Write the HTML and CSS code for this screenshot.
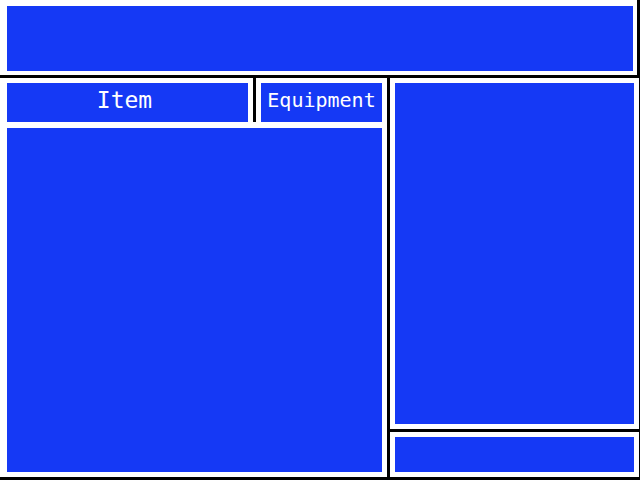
FILE: index.html
```html
<!DOCTYPE html>
<html lang="en">
<head>
  <meta charset="UTF-8" />
  <meta name="viewport" content="width=device-width, initial-scale=1.0" />
  <title>Menu</title>
  <link rel="stylesheet" href="styles.css">
</head>

<body>
  <div class="screen">
    <!-- 顶部信息窗口 -->
    <div class="window top-window">
      <div class="pane"></div>
    </div>

    <div class="main-row">
      <div class="left-col">
        <div class="tabs">
          <div class="window tab item-tab">
            <div class="pane tab-pane item-label">Item</div>
          </div>
          <div class="window tab equip-tab">
            <div class="pane tab-pane equip-label">Equipment</div>
          </div>
        </div>
        <div class="window list-window">
          <div class="pane"></div>
        </div>
      </div>

      <div class="right-col">
        <div class="window detail-window">
          <div class="pane"></div>
        </div>
        <div class="window status-window">
          <div class="pane"></div>
        </div>
      </div>
    </div>
  </div>
</body>
</html>
```

FILE: styles.css
```css
* {
  box-sizing: border-box;
}

body {
  margin: 0;
  padding: 0;
  background-color: #000;
  font-family: "DejaVu Sans Mono", "Liberation Mono", monospace;
}

.screen {
  width: 640px;
  height: 480px;
  overflow: hidden;
  background-color: #000;
}

.window {
  display: flex;
  background-color: #fff;
}

.pane {
  flex: 1;
  background-color: #1539f5;
  color: #fff;
}

.top-window {
  width: 637px;
  height: 75px;
  padding: 6px 4px 4px 7px;
}

.main-row {
  display: flex;
  gap: 3px;
  margin-top: 3px;
}

.left-col {
  display: flex;
  flex-direction: column;
  width: 387px;
}

.tabs {
  display: flex;
  gap: 3px;
  height: 44px;
}

.tab {
  padding-top: 5px;
}

.item-tab {
  width: 253px;
  padding-left: 7px;
  padding-right: 5px;
}

.equip-tab {
  flex: 1;
  padding-left: 5px;
  padding-right: 5px;
}

.tab-pane {
  display: flex;
  align-items: center;
  justify-content: center;
  padding-bottom: 5px;
}

.item-label {
  font-size: 23px;
  padding-right: 6px;
}

.equip-label {
  font-size: 20px;
}

.list-window {
  height: 355px;
  padding: 6px 5px 5px 7px;
}

.right-col {
  display: flex;
  flex-direction: column;
  gap: 3px;
  width: 249px;
}

.detail-window {
  height: 351px;
  padding: 5px;
}

.status-window {
  height: 45px;
  padding: 5px;
}
```
